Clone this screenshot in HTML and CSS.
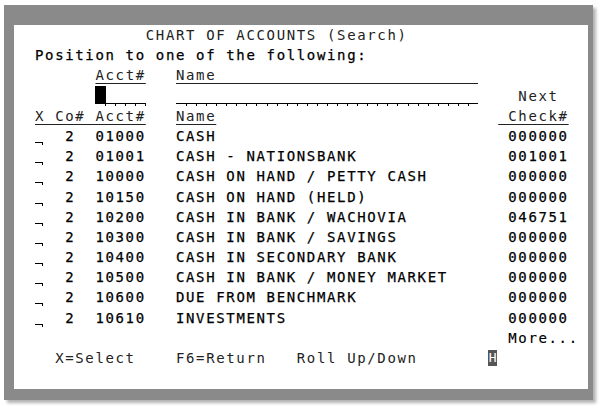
FILE: index.html
```html
<!DOCTYPE html>
<html>
<head>
<meta charset="utf-8">
<link rel="stylesheet" href="styles.css">
</head>
<body>
<div class="frame">
  <div class="screen">
    <div class="ln thin">           CHART OF ACCOUNTS (Search)</div>
    <div class="ln bold">Position to one of the following:</div>
    <div class="ln thin">      <span class="u">Acct#</span>   <span class="u">Name                          </span></div>
    <div class="ln thin">      <span class="fld f5"><span class="cursor"></span></span>   <span class="fld f30"></span>    Next</div>
    <div class="ln thin"><span class="u">X Co# Acct#</span>   <span class="u">Name</span>                            <span class="u chk"> Check#</span></div>
    <div class="ln bold"><span class="sel"></span>  2  01000   <span class="nm">CASH</span>000000</div>
    <div class="ln bold"><span class="sel"></span>  2  01001   <span class="nm">CASH - NATIONSBANK</span>001001</div>
    <div class="ln bold"><span class="sel"></span>  2  10000   <span class="nm">CASH ON HAND / PETTY CASH</span>000000</div>
    <div class="ln bold"><span class="sel"></span>  2  10150   <span class="nm">CASH ON HAND (HELD)</span>000000</div>
    <div class="ln bold"><span class="sel"></span>  2  10200   <span class="nm">CASH IN BANK / WACHOVIA</span>046751</div>
    <div class="ln bold"><span class="sel"></span>  2  10300   <span class="nm">CASH IN BANK / SAVINGS</span>000000</div>
    <div class="ln bold"><span class="sel"></span>  2  10400   <span class="nm">CASH IN SECONDARY BANK</span>000000</div>
    <div class="ln bold"><span class="sel"></span>  2  10500   <span class="nm">CASH IN BANK / MONEY MARKET</span>000000</div>
    <div class="ln bold"><span class="sel"></span>  2  10600   <span class="nm">DUE FROM BENCHMARK</span>000000</div>
    <div class="ln bold"><span class="sel"></span>  2  10610   <span class="nm">INVESTMENTS</span>000000</div>
    <div class="ln bold more">More...</div>
    <div class="ln thin">  X=Select    F6=Return   Roll Up/Down       <span class="hind">H</span></div>
  </div>
</div>
</body>
</html>
```

FILE: styles.css
```css
* { box-sizing: border-box; }
html, body { margin: 0; padding: 0; background: #fff; }
body { width: 600px; height: 410px; overflow: hidden; }

.frame {
  --cw: 10.07px;
  margin: 5px 0 0 4px;
  width: 589px;
  height: 395px;
  background: #8a8a8a;
  padding: 20px 5px 11px 10px;
  box-shadow: 3px 3px 3px rgba(0, 0, 0, 0.3);
}

.screen {
  background: #fff;
  height: 100%;
  padding-left: 21px;
  font-family: "DejaVu Sans Mono", monospace;
  font-size: 14px;
  letter-spacing: 1.64px;
  color: #000;
}

.ln {
  height: 20.2px;
  line-height: 20.2px;
  white-space: pre;
}

.thin { font-weight: normal; color: #222; }
.bold { font-weight: normal; color: #000; -webkit-text-stroke: 0.25px #000; }

.u {
  text-decoration: underline;
  text-decoration-thickness: 1px;
  text-underline-offset: 3px;
}
.chk { display: inline-block; margin-left: 4px; width: calc(var(--cw) * 7 - 4px); letter-spacing: 1.64px; text-indent: -4px; }

.fld {
  display: inline-block;
  vertical-align: top;
  height: 20.2px;
  background:
    linear-gradient(#000, #000) 0 17px / 100% 1px no-repeat,
    repeating-linear-gradient(to right, #000 0 1px, transparent 1px var(--cw)) var(--cw) 18px / calc(100% - var(--cw)) 2px no-repeat;
}
.f5 { width: calc(var(--cw) * 5); }
.f30 { width: calc(var(--cw) * 30); }

.cursor {
  display: block;
  width: 11px;
  height: 17px;
  background: #000;
}

.sel {
  display: inline-block;
  vertical-align: top;
  width: var(--cw);
  height: 20.2px;
  background:
    linear-gradient(#000, #000) 0 16px / 8px 1px no-repeat,
    linear-gradient(#000, #000) 7px 16px / 1px 3px no-repeat;
}

.nm {
  display: inline-block;
  width: calc(var(--cw) * 33);
}

.more { padding-left: calc(var(--cw) * 47); -webkit-text-stroke: 0.15px #000; }

.hind {
  display: inline-block;
  vertical-align: top;
  margin-top: 2px;
  width: 9px;
  height: 16px;
  line-height: 16px;
  background: #555;
  color: #fff;
  font-size: 13px;
  letter-spacing: 0;
  text-align: center;
  overflow: hidden;
  -webkit-text-stroke: 0;
}
```
